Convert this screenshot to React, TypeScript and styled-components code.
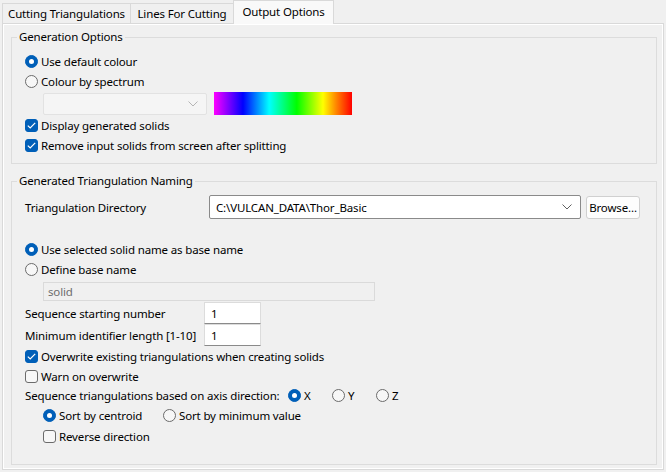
import React from 'react'
import styled, { createGlobalStyle } from 'styled-components'

const GlobalStyle = createGlobalStyle`
  html, body {
    margin: 0;
    padding: 0;
    background: #f0f0f0;
  }
  body {
    font-family: "Noto Sans", "Segoe UI", sans-serif;
    font-size: 11.5px;
    letter-spacing: -0.15px;
    color: #000;
  }
  * { box-sizing: border-box; }
`

const Window = styled.div`
  width: 666px;
  height: 472px;
  display: flex;
  flex-direction: column;
  padding: 0 2px 2px 2px;
  white-space: nowrap;
`

const TabBar = styled.div`
  display: flex;
  align-items: flex-end;
  height: 24px;
  position: relative;
  z-index: 1;
  margin-bottom: -1px;
`

const Tab = styled.div<{ $active?: boolean; $width: number }>`
  width: ${p => p.$width}px;
  height: ${p => (p.$active ? 24 : 21)}px;
  margin-left: -1px;
  display: flex;
  align-items: center;
  justify-content: center;
  padding-bottom: ${p => (p.$active ? 3 : 0)}px;
  border: 1px solid #d9d9d9;
  border-bottom: ${p => (p.$active ? 'none' : '1px solid #d9d9d9')};
  background: ${p => (p.$active ? '#f9f9f9' : '#f0f0f0')};
  &:first-child { margin-left: 0; }
`

const Panel = styled.div`
  flex: 1;
  display: flex;
  flex-direction: column;
  border: 1px solid #d9d9d9;
  box-shadow: inset 0 0 0 1px #fff;
  padding: 5px 6px 4px 8px;
`

const Group = styled.fieldset<{ $grow?: boolean }>`
  margin: 0;
  padding: 0;
  min-width: 0;
  border: 1px solid #dcdcdc;
  display: flex;
  flex-direction: column;
  flex: ${p => (p.$grow ? 1 : 'none')};
  & + & { margin-top: 9px; }
`

const Legend = styled.legend`
  margin-left: 5px;
  padding: 0 2px;
  line-height: 16px;
`

const GroupBody = styled.div<{ $pt: number; $pb: number }>`
  display: flex;
  flex-direction: column;
  padding: ${p => p.$pt}px 16px ${p => p.$pb}px 13px;
`

const Row = styled.div<{ $h?: number; $indent?: number; $mt?: number }>`
  display: flex;
  align-items: center;
  height: ${p => p.$h ?? 20}px;
  margin-left: ${p => p.$indent ?? 0}px;
  margin-top: ${p => p.$mt ?? 0}px;
`

const Option = styled.label<{ $width?: number }>`
  display: flex;
  align-items: center;
  width: ${p => (p.$width ? `${p.$width}px` : 'auto')};
`

const RadioMark = styled.span<{ $checked?: boolean }>`
  width: 13px;
  height: 13px;
  border-radius: 50%;
  margin-right: 3px;
  flex: none;
  position: relative;
  background: ${p => (p.$checked ? '#005fb8' : '#f7f7f7')};
  border: 1px solid ${p => (p.$checked ? '#005fb8' : '#6b6b6b')};
  &::after {
    content: '';
    display: ${p => (p.$checked ? 'block' : 'none')};
    position: absolute;
    left: 3px;
    top: 3px;
    width: 5px;
    height: 5px;
    border-radius: 50%;
    background: #fff;
  }
`

const CheckMark = styled.span<{ $checked?: boolean }>`
  width: 13px;
  height: 13px;
  border-radius: 3px;
  margin-right: 3px;
  flex: none;
  display: flex;
  align-items: center;
  justify-content: center;
  background: ${p => (p.$checked ? '#005fb8' : '#f7f7f7')};
  border: 1px solid ${p => (p.$checked ? '#005fb8' : '#6b6b6b')};
`

const Combo = styled.div<{ $disabled?: boolean; $width?: number; $h: number }>`
  height: ${p => p.$h}px;
  width: ${p => (p.$width ? `${p.$width}px` : 'auto')};
  flex: ${p => (p.$width ? 'none' : 1)};
  display: flex;
  align-items: center;
  justify-content: space-between;
  padding: 0 8px 0 6px;
  background: ${p => (p.$disabled ? '#f5f5f5' : '#fff')};
  border: 1px solid ${p => (p.$disabled ? '#e2e2e2' : '#8a8a8a')};
  border-radius: 2px;
`

const Spectrum = styled.div`
  width: 138px;
  height: 23px;
  margin-left: 7px;
  background: linear-gradient(
    to right,
    #ff00ff 0%,
    #0000ff 21%,
    #00ffff 40%,
    #00ff00 60%,
    #ffff00 79%,
    #ff8000 89%,
    #ff0000 100%
  );
`

const DirRow = styled.div`
  display: grid;
  grid-template-columns: 179px 1fr 54px;
  column-gap: 5px;
  align-items: center;
  margin-top: 6px;
`

const Button = styled.div`
  height: 23px;
  display: flex;
  align-items: center;
  justify-content: center;
  background: #fdfdfd;
  border: 1px solid #d0d0d0;
  border-radius: 3px;
`

const DisabledInput = styled.div`
  width: 332px;
  height: 19px;
  margin: 3px 0 1px 18px;
  display: flex;
  align-items: center;
  padding-left: 4px;
  background: #f0f0f0;
  border: 1px solid #dadada;
  color: #6d6d6d;
`

const FieldGrid = styled.div`
  display: grid;
  grid-template-columns: 179px 57px;
  grid-auto-rows: 22px;
  align-items: center;
`

const NumInput = styled.div`
  height: 22px;
  display: flex;
  align-items: center;
  padding-left: 6px;
  background: #fff;
  border: 1px solid #dcdcdc;
  border-bottom-color: #8a8a8a;
`

const AxisLabel = styled.span`
  width: 263px;
`

const Gap = styled.div<{ $h: number }>`
  height: ${p => p.$h}px;
`

function Chevron({ color }: { color: string }) {
  return (
    <svg width="10" height="6" viewBox="0 0 10 6">
      <path d="M0.5 0.5 L5 5 L9.5 0.5" fill="none" stroke={color} strokeWidth="1" />
    </svg>
  )
}

function Radio({ checked, label, width }: { checked?: boolean; label: string; width?: number }) {
  return (
    <Option $width={width}>
      <RadioMark $checked={checked} />
      {label}
    </Option>
  )
}

function Check({ checked, label }: { checked?: boolean; label: string }) {
  return (
    <Option>
      <CheckMark $checked={checked}>
        {checked && (
          <svg width="9" height="7" viewBox="0 0 9 7">
            <path d="M0.8 3.6 L3.2 5.9 L8.2 0.8" fill="none" stroke="#fff" strokeWidth="1.2" />
          </svg>
        )}
      </CheckMark>
      {label}
    </Option>
  )
}

export default function App() {
  return (
    <Window>
      <GlobalStyle />
      <TabBar>
        <Tab $width={129}>Cutting Triangulations</Tab>
        <Tab $width={104}>Lines For Cutting</Tab>
        <Tab $width={101} $active>Output Options</Tab>
      </TabBar>
      <Panel>
        <Group>
          <Legend>Generation Options</Legend>
          <GroupBody $pt={6} $pb={8}>
            <Row><Radio checked label="Use default colour" /></Row>
            <Row><Radio label="Colour by spectrum" /></Row>
            <Row $h={23} $indent={18} $mt={1}>
              <Combo $disabled $width={164} $h={22}>
                <span />
                <Chevron color="#b5b5b5" />
              </Combo>
              <Spectrum />
            </Row>
            <Row><Check checked label="Display generated solids" /></Row>
            <Row><Check checked label="Remove input solids from screen after splitting" /></Row>
          </GroupBody>
        </Group>
        <Group $grow>
          <Legend>Generated Triangulation Naming</Legend>
          <GroupBody $pt={0} $pb={0}>
            <DirRow>
              <span>Triangulation Directory</span>
              <Combo $h={24}>
                <span>C:\VULCAN_DATA\Thor_Basic</span>
                <Chevron color="#606060" />
              </Combo>
              <Button>Browse...</Button>
            </DirRow>
            <Gap $h={20} />
            <Row><Radio checked label="Use selected solid name as base name" /></Row>
            <Row><Radio label="Define base name" /></Row>
            <DisabledInput>solid</DisabledInput>
            <FieldGrid>
              <span>Sequence starting number</span>
              <NumInput>1</NumInput>
              <span>Minimum identifier length [1-10]</span>
              <NumInput>1</NumInput>
            </FieldGrid>
            <Row><Check checked label="Overwrite existing triangulations when creating solids" /></Row>
            <Row><Check label="Warn on overwrite" /></Row>
            <Row $h={18}>
              <AxisLabel>Sequence triangulations based on axis direction:</AxisLabel>
              <Radio checked label="X" width={44} />
              <Radio label="Y" width={44} />
              <Radio label="Z" width={44} />
            </Row>
            <Row $h={22} $indent={18}>
              <Radio checked label="Sort by centroid" width={120} />
              <Radio label="Sort by minimum value" />
            </Row>
            <Row $indent={18}><Check label="Reverse direction" /></Row>
          </GroupBody>
        </Group>
      </Panel>
    </Window>
  )
}
